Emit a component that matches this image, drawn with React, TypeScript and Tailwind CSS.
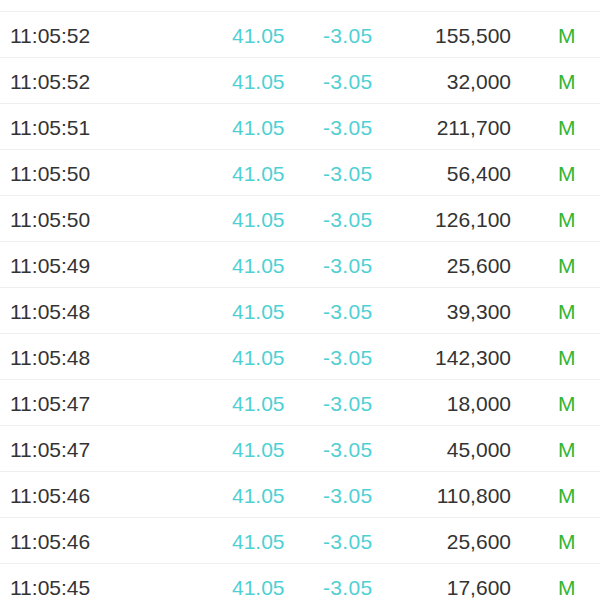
import React from 'react';

type Trade = {
    time: string;
    price: string;
    change: string;
    volume: string;
};

const trades: Trade[] = [
    { time: '11:05:52', price: '41.05', change: '-3.05', volume: '155,500' },
    { time: '11:05:52', price: '41.05', change: '-3.05', volume: '32,000' },
    { time: '11:05:51', price: '41.05', change: '-3.05', volume: '211,700' },
    { time: '11:05:50', price: '41.05', change: '-3.05', volume: '56,400' },
    { time: '11:05:50', price: '41.05', change: '-3.05', volume: '126,100' },
    { time: '11:05:49', price: '41.05', change: '-3.05', volume: '25,600' },
    { time: '11:05:48', price: '41.05', change: '-3.05', volume: '39,300' },
    { time: '11:05:48', price: '41.05', change: '-3.05', volume: '142,300' },
    { time: '11:05:47', price: '41.05', change: '-3.05', volume: '18,000' },
    { time: '11:05:47', price: '41.05', change: '-3.05', volume: '45,000' },
    { time: '11:05:46', price: '41.05', change: '-3.05', volume: '110,800' },
    { time: '11:05:46', price: '41.05', change: '-3.05', volume: '25,600' },
    { time: '11:05:45', price: '41.05', change: '-3.05', volume: '17,600' }
];

function TradeRow({ trade }: { trade: Trade }) {
    return (
        <div className="flex h-[46px] items-center border-b border-[#efefef] pl-[10px] pt-[2px] text-[21px] leading-none">
            <span className="w-[222px] text-[#333333]">{trade.time}</span>
            <span className="w-[91px] text-[#4fd0d4]">{trade.price}</span>
            <span className="w-[77px] tracking-[0.3px] text-[#4fd0d4]">{trade.change}</span>
            <span className="w-[111px] text-right text-[#333333]">{trade.volume}</span>
            <span className="pl-[47px] text-[#33b533]">M</span>
        </div>
    );
}

export default function App() {
    return (
        <div
            className="h-[600px] w-[600px] overflow-hidden bg-white"
            style={{ fontFamily: '"Liberation Sans", Arial, sans-serif' }}
        >
            {/* tail of the row scrolled off the top */}
            <div className="h-[12px] border-b border-[#efefef]" />
            {trades.map((t, i) => (
                <TradeRow key={i} trade={t} />
            ))}
        </div>
    );
}
